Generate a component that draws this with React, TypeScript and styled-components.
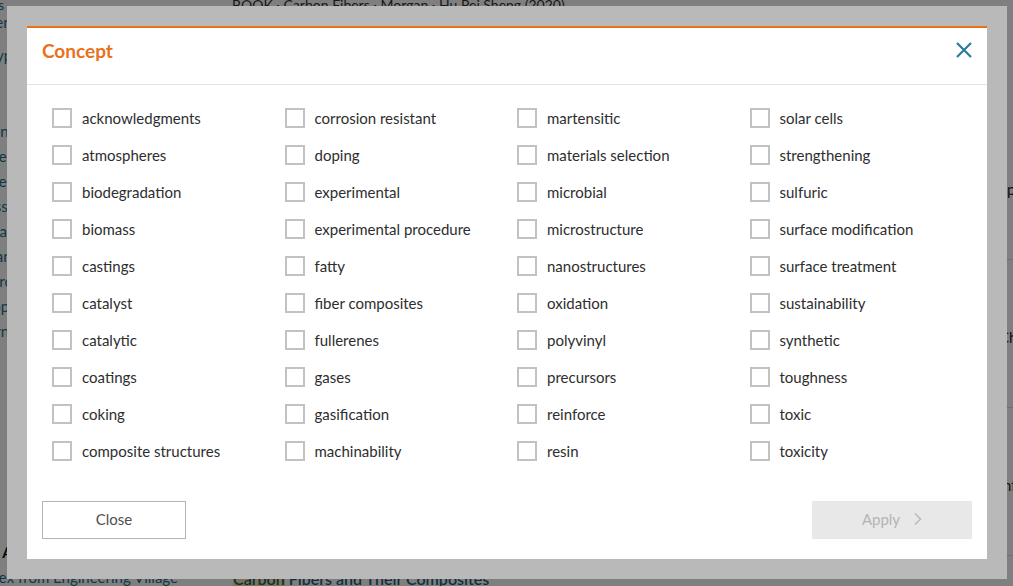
import React from 'react'
import styled, { createGlobalStyle } from 'styled-components'

const GlobalStyle = createGlobalStyle`
  html, body {
    margin: 0;
    padding: 0;
    width: 1013px;
    height: 586px;
    overflow: hidden;
    background: #fff;
    font-family: Lato, "Open Sans", "Liberation Sans", sans-serif;
  }
`

const concepts = [
  'acknowledgments', 'atmospheres', 'biodegradation', 'biomass', 'castings',
  'catalyst', 'catalytic', 'coatings', 'coking', 'composite structures',
  'corrosion resistant', 'doping', 'experimental', 'experimental procedure', 'fatty',
  'fiber composites', 'fullerenes', 'gases', 'gasification', 'machinability',
  'martensitic', 'materials selection', 'microbial', 'microstructure', 'nanostructures',
  'oxidation', 'polyvinyl', 'precursors', 'reinforce', 'resin',
  'solar cells', 'strengthening', 'sulfuric', 'surface modification', 'surface treatment',
  'sustainability', 'synthetic', 'toughness', 'toxic', 'toxicity',
]

const sideLinks = [
  'Polymer composites only', 'Engineer', 'Power engineer', 'Classifi', 'Estimate',
  'Manu', 'Research', 'Topic', 'Journal',
]

const railCards = ['Spec', 'Chemistry i', 'Info']

export default function App() {
  return (
    <>
      <GlobalStyle />
      <Page>
        <TopLine>
          <Crumb>Results</Crumb>
          <BookMeta>BOOK · Carbon Fibers · Morgan · Hu Pei Sheng (2020)</BookMeta>
        </TopLine>
        <PageBody>
          <Sidebar>
            <SideLink>Menu</SideLink>
            <SideLink $gap={8}>Type</SideLink>
            <SideGroup>
              {sideLinks.map((l) => (
                <SideLink key={l}>{l}</SideLink>
              ))}
            </SideGroup>
            <SideHeading>All</SideHeading>
            <SideSource>Index from Engineering Village</SideSource>
          </Sidebar>
          <Main>
            <ResultTitle>
              <Mark>Carbon</Mark> Fibers and Their Composites
            </ResultTitle>
          </Main>
          <RightRail>
            {railCards.map((r) => (
              <RailCard key={r}>
                <RailDot />
                <RailText>{r}</RailText>
              </RailCard>
            ))}
          </RightRail>
        </PageBody>
      </Page>

      <Overlay>
        <Frame>
          <Modal>
            <Header>
              <Title>Concept</Title>
              <CloseIcon aria-label="Close">
                <svg width="18" height="18" viewBox="0 0 18 18">
                  <path d="M2 2 L16 16 M16 2 L2 16" stroke="#2b7ba1" strokeWidth="2.2" fill="none" />
                </svg>
              </CloseIcon>
            </Header>
            <ConceptGrid>
              {concepts.map((c) => (
                <Option key={c}>
                  <Box />
                  <Label>{c}</Label>
                </Option>
              ))}
            </ConceptGrid>
            <Footer>
              <CloseButton>Close</CloseButton>
              <ApplyButton disabled>
                Apply
                <svg width="9" height="14" viewBox="0 0 9 14">
                  <path d="M2 1.5 L7.5 7 L2 12.5" stroke="#b7b7b7" strokeWidth="1.4" fill="none" />
                </svg>
              </ApplyButton>
            </Footer>
          </Modal>
        </Frame>
      </Overlay>
    </>
  )
}

const Page = styled.div`
  width: 1013px;
  height: 586px;
  overflow: hidden;
  display: flex;
  flex-direction: column;
  color: #1f6f8b;
`
const TopLine = styled.div`
  display: flex;
  align-items: center;
  height: 10px;
  line-height: 10px;
  font-size: 14px;
`
const Crumb = styled.span`
  margin-left: -40px;
  width: 272px;
`
const BookMeta = styled.span`
  color: #333;
  font-size: 14px;
`
const PageBody = styled.div`
  flex: 1;
  display: flex;
  min-height: 0;
`
const Sidebar = styled.div`
  width: 220px;
  margin-left: -200px;
  flex: none;
  display: flex;
  flex-direction: column;
  font-size: 15px;
  text-align: right;
`
const SideGroup = styled.div`
  margin-top: 51px;
  display: flex;
  flex-direction: column;
`
const SideLink = styled.div<{ $gap?: number }>`
  height: 25px;
  line-height: 25px;
  margin-top: ${({ $gap }) => $gap || 0}px;
  white-space: nowrap;
`
const SideHeading = styled.div`
  margin-top: 196px;
  color: #111;
  font-weight: 700;
  height: 25px;
  line-height: 25px;
`
const SideSource = styled.div`
  height: 25px;
  line-height: 25px;
  text-align: left;
  padding-left: 178px;
  white-space: nowrap;
`
const Main = styled.div`
  flex: 1;
  display: flex;
  align-items: flex-end;
  padding-left: 213px;
  margin-bottom: -4px;
`
const ResultTitle = styled.div`
  font-size: 16px;
  color: #1c5f78;
  font-weight: 600;
  line-height: 22px;
`
const Mark = styled.span`
  background: #f6e7a8;
`
const RightRail = styled.div`
  width: 16px;
  flex: none;
  display: flex;
  flex-direction: column;
  padding-top: 102px;
  color: #222;
  font-size: 15px;
`
const RailCard = styled.div`
  height: 148px;
  box-sizing: border-box;
  border-bottom: 1px solid #ddd;
  padding: 16px 0 0 2px;
  display: flex;
  flex-direction: column;
`
const RailDot = styled.span`
  width: 2px;
  height: 2px;
  background: #1f6f8b;
`
const RailText = styled.div`
  margin-top: 50px;
  white-space: nowrap;
`

const Overlay = styled.div`
  position: fixed;
  inset: 0;
  background: rgba(0, 0, 0, 0.5);
  padding: 6px 6px 7px 7px;
  box-sizing: border-box;
`
const Frame = styled.div`
  width: 1000px;
  height: 573px;
  box-sizing: border-box;
  padding: 20px;
  background: #b9b9b9;
`
const Modal = styled.div`
  height: 100%;
  background: #fff;
  border-top: 2px solid #e9711c;
  box-sizing: border-box;
  display: flex;
  flex-direction: column;
`
const Header = styled.div`
  height: 57px;
  box-sizing: border-box;
  border-bottom: 1px solid #e4e4e4;
  padding: 0 15px 12px;
  display: flex;
  align-items: center;
  justify-content: space-between;
`
const Title = styled.h2`
  margin: 0;
  font-size: 19px;
  font-weight: 700;
  color: #e9711c;
`
const CloseIcon = styled.button`
  border: 0;
  background: none;
  padding: 0;
  display: flex;
  margin-right: -1px;
  cursor: pointer;
`
const ConceptGrid = styled.div`
  display: grid;
  grid-auto-flow: column;
  grid-template-rows: repeat(10, 37px);
  grid-template-columns: repeat(4, 232.5px);
  padding: 14px 0 0 25px;
`
const Option = styled.label`
  display: flex;
  align-items: center;
  gap: 10px;
  cursor: pointer;
`
const Box = styled.span`
  width: 20px;
  height: 20px;
  box-sizing: border-box;
  border: 2px solid #c2c2c2;
  background: #fff;
  flex: none;
`
const Label = styled.span`
  font-size: 15px;
  color: #2e2e2e;
  white-space: nowrap;
`
const Footer = styled.div`
  margin-top: auto;
  padding: 0 15px 20px;
  display: flex;
  justify-content: space-between;
`
const CloseButton = styled.button`
  width: 144px;
  height: 38px;
  padding: 0 0 2px;
  background: #fff;
  border: 1px solid #b5b5b5;
  font-family: inherit;
  font-size: 15px;
  color: #505050;
  cursor: pointer;
`
const ApplyButton = styled.button`
  width: 160px;
  height: 38px;
  background: #e8e8e8;
  border: 0;
  font-family: inherit;
  font-size: 15px;
  color: #b4b4b4;
  display: flex;
  align-items: center;
  justify-content: center;
  gap: 13px;
  padding: 0 0 2px;
`
